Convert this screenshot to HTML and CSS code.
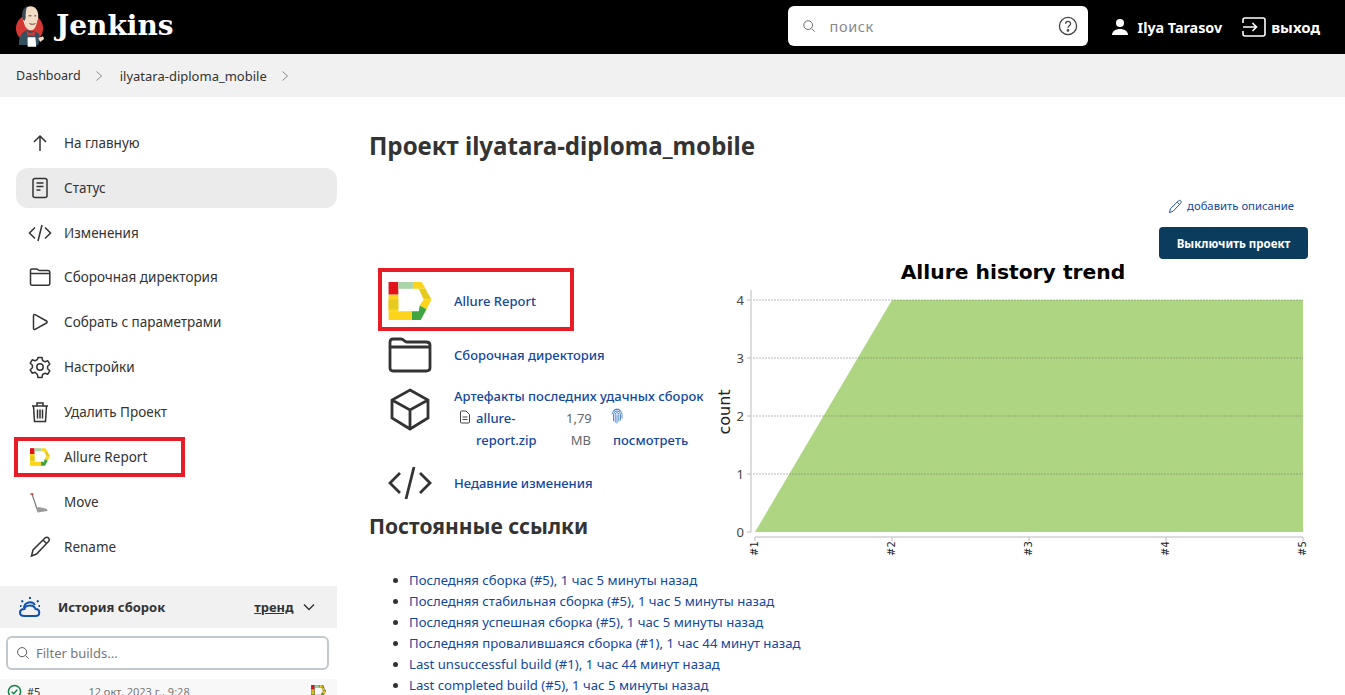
FILE: index.html
```html
<!DOCTYPE html>
<html>
    <head>
        <title>Jenkins</title>
        <link rel="stylesheet" href="styles.css">
    </head>
    <body>
        <svg class="sprites" width="0" height="0">
            <symbol id="allure" viewBox="0 0 44 39">
                <path d="M0 0h10v13H0z" fill="#e2131a"/>
                <path d="M10 0h15v7H10z" fill="#a9d5a8"/>
                <path d="M25 0h9l4 7H25z" fill="#fcd41c"/>
                <path d="M34 0l10 18h-8L31 7h7z" fill="#e5cb1f"/>
                <path d="M44 18l-5 10-7-4 4-6z" fill="#fcd41c"/>
                <path d="M39 28l-6 11h-9v-9h7l1-6z" fill="#3fa63f"/>
                <path d="M0 13h10v17H0z" fill="#fcd41c"/>
                <path d="M0 18h10v10H0z" fill="#e5cb1f"/>
                <path d="M0 30h24v9H0z" fill="#fcd41c"/>
            </symbol>
        </svg>

        <header class="topbar">
            <a class="brand">
                <svg class="brand-logo" viewBox="0 0 32 44">
                    <circle cx="15" cy="25" r="14" fill="#d33833"/>
                    <path d="M4 42c0-9 3-13 8-15l8 1c4 1 6 4 6 8l-2 6z" fill="#335061"/>
                    <path d="M8 13c0-7 3-11 8-11s8 4 8 10c0 2 0 4-1 5-1 6-3 10-7 10-4-1-6-4-7-9-1-1-1-3-1-5z" fill="#f3dcc6"/>
                    <path d="M8 16c-2-8 1-13 5-14-2 3-2 7-2 12l-1 3z" fill="#3c4a57"/>
                    <path d="M14 12h3M20 12h2M15 20c2 1 4 1 6 0" stroke="#5a3d30" stroke-width="1" fill="none"/>
                    <path d="M12 28l4 2 5-2-1 5-4-1-3 1z" fill="#d33833"/>
                    <path d="M13 34h8l1 10h-9z" fill="#fff"/>
                    <path d="M24 35l5-2 1 3-4 3z" fill="#f3dcc6"/>
                </svg>
                <span class="brand-name">Jenkins</span>
            </a>
            <div class="search">
                <svg class="search-icon" viewBox="0 0 16 16"><circle cx="7" cy="7" r="5"/><path d="M11 11l3.5 3.5"/></svg>
                <span class="search-text">поиск</span>
                <svg class="help-icon" viewBox="0 0 20 20"><circle cx="10" cy="10" r="8.6"/><path d="M7.6 7.8c0-3.2 5-3.2 5 0 0 2-2.6 2-2.6 4"/><circle class="dot" cx="10" cy="14.4" r=".7"/></svg>
            </div>
            <a class="user">
                <svg class="user-icon" viewBox="0 0 18 18"><circle cx="9" cy="5" r="4"/><path d="M1 17c0-4 4-6 8-6s8 2 8 6z"/></svg>
                Ilya Tarasov
            </a>
            <a class="logout">
                <svg class="logout-icon" viewBox="0 0 24 20"><path d="M1 6V3c0-1 1-2 2-2h18c1 0 2 1 2 2v14c0 1-1 2-2 2H3c-1 0-2-1-2-2v-3"/><path d="M1 10h13M10.500 6l4 4-4 4"/></svg>
                выход
            </a>
        </header>

        <nav class="breadcrumbs">
            <a class="crumb-root">Dashboard</a>
            <svg class="crumb-arrow" viewBox="0 0 8 12"><path d="M1.500 1.500L6.500 6l-5 4.500"/></svg>
            <a>ilyatara-diploma_mobile</a>
            <svg class="crumb-arrow" viewBox="0 0 8 12"><path d="M1.500 1.500L6.500 6l-5 4.500"/></svg>
        </nav>

        <div class="page">
            <aside class="sidebar">
                <div class="tasks">
                    <a class="task">
                        <svg class="task-icon" viewBox="0 0 24 24"><path d="M12 20V5M6 11l6-6 6 6"/></svg>
                        На главную
                    </a>
                    <a class="task active">
                        <svg class="task-icon" viewBox="0 0 24 24"><rect x="5" y="2.500" width="14" height="19" rx="2"/><path d="M8.500 7h7M8.500 10.500h7M8.500 14h4"/></svg>
                        Статус
                    </a>
                    <a class="task">
                        <svg class="task-icon" viewBox="0 0 24 24"><path d="M7 6.500L1.500 12 7 17.500M17 6.500l5.500 5.500-5.500 5.500M14 4l-4 16"/></svg>
                        Изменения
                    </a>
                    <a class="task">
                        <svg class="task-icon" viewBox="0 0 24 24"><path d="M2.500 7V5.500c0-1 .8-1.500 1.500-1.500h4.500c1.500 0 1.500 1.500 3 1.500H20c1 0 1.800.7 1.800 1.500v11.500c0 1-.8 1.700-1.800 1.700H4c-.8 0-1.500-.7-1.500-1.700zM2.500 8.500h19.300"/></svg>
                        Сборочная директория
                    </a>
                    <a class="task">
                        <svg class="task-icon" viewBox="0 0 24 24"><path d="M5.500 5.500c0-.9.8-1.300 1.600-.9L18.500 11c.8.500.8 1.500 0 2L7.100 19.400c-.8.400-1.600 0-1.600-.9z"/></svg>
                        Собрать с параметрами
                    </a>
                    <a class="task">
                        <svg class="task-icon" viewBox="0 0 24 24"><circle cx="12" cy="12" r="3.200"/><path d="M10 2.500h4l.6 3 2.400 1.300 2.800-1 2 3.400-2.200 2v2.600l2.200 2-2 3.400-2.800-1-2.400 1.300-.6 3h-4l-.6-3L7 17.200l-2.800 1-2-3.400 2.200-2v-2.600l-2.200-2 2-3.400 2.800 1 2.400-1.300z" stroke-linejoin="round"/></svg>
                        Настройки
                    </a>
                    <a class="task">
                        <svg class="task-icon" viewBox="0 0 24 24"><path d="M4 6h16M9 5.500V3h6v2.500M5.500 6l1 15.500h11l1-15.500M9.500 9.500v9M12 9.500v9M14.500 9.500v9"/></svg>
                        Удалить Проект
                    </a>
                    <a class="task">
                        <svg class="task-icon plain" viewBox="0 0 24 24"><use href="#allure" x="2" y="3" width="20" height="18"/></svg>
                        Allure Report
                        <span class="mark mark-side"></span>
                    </a>
                    <a class="task">
                        <svg class="task-icon plain" viewBox="0 0 24 24">
                            <path d="M4 4l5 15" stroke="#777" stroke-width="1.200" fill="none"/>
                            <path d="M2.500 4h3" stroke="#c33" stroke-width="1.500" fill="none"/>
                            <path d="M8 18l3-1 8 2 .5 2-10 1.500z" fill="#9a9a9a"/>
                        </svg>
                        Move
                    </a>
                    <a class="task">
                        <svg class="task-icon" viewBox="0 0 24 24"><path d="M3.500 21l1.500-6L17 3c1-1 2.500-1 3.500 0s1 2.500 0 3.500L8.500 19zM15 5l4 4"/></svg>
                        Rename
                    </a>
                </div>

                <section class="history">
                    <div class="history-head">
                        <svg class="history-icon" viewBox="0 0 24 24">
                            <path d="M6.500 21c-6 0-6-7 0-7 .5-4 9-5 11 0 5 0 5 7 0 7z"/>
                            <path d="M6 13a6 6 0 0 1 11-3M12 2v2M3.500 5.500l1.500 1.500M20.500 5.500L19 7M2 11h1.500M20.500 11H22"/>
                        </svg>
                        <span class="history-title">История сборок</span>
                        <span class="history-trend">тренд</span>
                        <svg class="history-arrow" viewBox="0 0 12 8"><path d="M1 1.500l5 5 5-5"/></svg>
                    </div>
                    <div class="filter">
                        <svg class="filter-icon" viewBox="0 0 16 16"><circle cx="7" cy="7" r="5.200"/><path d="M11 11l3.500 3.500"/></svg>
                        <span>Filter builds...</span>
                    </div>
                    <div class="build">
                        <svg class="build-icon" viewBox="0 0 16 16"><circle cx="8" cy="8" r="6.500"/><path d="M5 8.200l2.200 2.200L11 6"/></svg>
                        <span class="build-no">#5</span>
                        <span class="build-date">12 окт. 2023 г., 9:28</span>
                        <svg class="build-allure"><use href="#allure"/></svg>
                    </div>
                </section>
            </aside>

            <main class="content">
                <h1 class="title">Проект ilyatara-diploma_mobile</h1>
                <div class="actions">
                    <a class="add-desc">
                        <svg class="add-desc-icon" viewBox="0 0 16 16"><path d="M1.500 14.500l1-4L11 2c.8-.8 1.800-.8 2.500 0s.8 1.700 0 2.500L5.500 13zM10 3.500l2.500 2.500"/></svg>
                        добавить описание
                    </a>
                    <button class="disable-btn">Выключить проект</button>
                </div>

                <div class="columns">
                    <div class="summary">
                        <div class="links">
                            <div class="link-row allure-row">
                                <svg class="link-icon plain"><use href="#allure"/></svg>
                                <a>Allure Report</a>
                                <span class="mark mark-main"></span>
                            </div>
                            <div class="link-row folder-row">
                                <svg class="link-icon" viewBox="0 0 44 36"><path d="M2 8V5c0-2 1-3 3-3h8c3 0 3 3 6 3h19c2 0 4 1 4 3v23c0 2-2 3-4 3H5c-2 0-3-1-3-3zM2 10h40"/></svg>
                                <a>Сборочная директория</a>
                            </div>
                            <div class="link-row artifact-row">
                                <svg class="link-icon cube-icon" viewBox="0 0 44 44"><path d="M22 3L40 13v18L22 42 4 31V13zM4 13l18 10 18-10M22 23v19"/></svg>
                                <div class="artifact">
                                    <a>Артефакты последних удачных сборок</a>
                                    <div class="artifact-files">
                                        <svg class="file-icon" viewBox="0 0 12 14"><path d="M1.500 2c0-.6.4-1 1-1h4.500l3.500 3.500V12c0 .6-.4 1-1 1h-7c-.6 0-1-.4-1-1zM3.500 7h5M3.500 9.500h5"/></svg>
                                        <a class="file-name">allure-report.zip</a>
                                        <span class="file-size">1,79 MB</span>
                                        <span class="file-view">
                                            <svg class="print-icon" viewBox="0 0 12 16"><path d="M2.500 2.500a5 5 0 0 1 7 0M1 6.500a5 5 0 0 1 10 0v4M2.500 13V6.500a3.500 3.500 0 0 1 7 0v6M4.200 14.500V6.500a1.800 1.800 0 0 1 3.600 0v7M6 6.500v9"/></svg>
                                            <a>посмотреть</a>
                                        </span>
                                    </div>
                                </div>
                            </div>
                            <div class="link-row changes-row">
                                <svg class="link-icon" viewBox="0 0 44 36"><path d="M12 8L2 18l10 10M32 8l10 10-10 10M26 2l-8 32"/></svg>
                                <a>Недавние изменения</a>
                            </div>
                        </div>
                        <h2 class="subtitle">Постоянные ссылки</h2>
                        <ul class="permalinks">
                            <li><a>Последняя сборка (#5), 1 час 5 минуты назад</a></li>
                            <li><a>Последняя стабильная сборка (#5), 1 час 5 минуты назад</a></li>
                            <li><a>Последняя успешная сборка (#5), 1 час 5 минуты назад</a></li>
                            <li><a>Последняя провалившаяся сборка (#1), 1 час 44 минут назад</a></li>
                            <li><a>Last unsuccessful build (#1), 1 час 44 минут назад</a></li>
                            <li><a>Last completed build (#5), 1 час 5 минуты назад</a></li>
                        </ul>
                    </div>

                    <svg class="chart" viewBox="715 259 630 310">
                        <text class="chart-title" x="1013" y="279">Allure history trend</text>
                        <path class="chart-area" d="M755 532L892 300H1303V532z"/>
                        <path class="chart-grid" d="M753 300H1303M753 358H1303M753 416H1303M753 474H1303"/>
                        <path class="chart-axis" d="M751 290V532h-4M751 300h-4M751 358h-4M751 416h-4M751 474h-4"/>
                        <path class="chart-axis" d="M755 537H1303M755 537v4M892 537v4M1029 537v4M1166 537v4M1303 537v4"/>
                        <text class="chart-tick" x="744" y="305">4</text>
                        <text class="chart-tick" x="744" y="363">3</text>
                        <text class="chart-tick" x="744" y="421">2</text>
                        <text class="chart-tick" x="744" y="479">1</text>
                        <text class="chart-tick" x="744" y="537">0</text>
                        <text class="chart-label" transform="translate(730 412) rotate(-90)">count</text>
                        <text class="chart-build" transform="translate(758 556) rotate(-90)">#1</text>
                        <text class="chart-build" transform="translate(895 556) rotate(-90)">#2</text>
                        <text class="chart-build" transform="translate(1032 556) rotate(-90)">#3</text>
                        <text class="chart-build" transform="translate(1169 556) rotate(-90)">#4</text>
                        <text class="chart-build" transform="translate(1306 556) rotate(-90)">#5</text>
                    </svg>
                </div>
            </main>
        </div>
    </body>
</html>
```

FILE: styles.css
```css
html, body {
    height: 100%;
    margin: 0;
    overflow: hidden;
}
body {
    font-family: "Noto Sans", "Open Sans", sans-serif;
    font-size: 13px;
    color: #333;
    background-color: #fff;
}
svg {
    display: block;
    flex: none;
    fill: none;
    stroke: currentColor;
}
svg.plain {
    stroke: none;
}
.sprites {
    position: absolute;
}
a {
    color: inherit;
}

/* header */
.topbar {
    display: flex;
    align-items: center;
    height: 54px;
    padding: 0 25px 0 15px;
    background-color: #000;
    color: #fff;
}
.brand {
    display: flex;
    align-items: center;
    gap: 10px;
    margin-right: auto;
    margin-top: -3px;
}
.brand-logo {
    width: 31px;
    height: 43px;
    stroke: none;
}
.brand-name {
    font-family: "DejaVu Serif", serif;
    font-size: 28px;
    font-weight: bold;
}
.search {
    display: flex;
    align-items: center;
    width: 300px;
    height: 40px;
    box-sizing: border-box;
    margin-top: -2px;
    padding: 0 10px 0 14px;
    border-radius: 6px;
    background-color: #fff;
    color: #666;
}
.search-icon {
    width: 14px;
    height: 14px;
    stroke-width: 1.100;
}
.search-text {
    flex: 1;
    margin-left: 14px;
    font-size: 14.500px;
    letter-spacing: 0.6px;
    color: #888;
}
.help-icon {
    width: 20px;
    height: 20px;
    stroke-width: 1.300;
    color: #444;
}
.help-icon .dot {
    fill: currentColor;
}
.user {
    display: flex;
    align-items: center;
    gap: 9px;
    margin-left: 23px;
    font-weight: bold;
    font-size: 14.300px;
}
.user-icon {
    width: 18px;
    height: 18px;
    fill: #fff;
    stroke: none;
}
.logout {
    display: flex;
    align-items: center;
    gap: 5px;
    margin-left: 20px;
    font-weight: bold;
    font-size: 15px;
}
.logout-icon {
    width: 24px;
    height: 20px;
    stroke-width: 1.600;
}

/* breadcrumbs */
.breadcrumbs {
    display: flex;
    align-items: center;
    height: 43px;
    padding-left: 16px;
    background-color: #f1f1f1;
    color: #333;
    font-size: 13px;
}
.crumb-root {
    font-size: 12.500px;
}
.crumb-arrow {
    width: 8px;
    height: 12px;
    margin: 0 17px 0 14px;
    color: #888;
}

/* layout */
.page {
    display: flex;
}
.sidebar {
    flex: none;
    width: 337px;
}
.content {
    flex: 1;
    padding: 0 37px 0 33px;
    min-width: 0;
}

/* side panel */
.tasks {
    display: flex;
    flex-direction: column;
    gap: 4.900px;
    padding: 25.800px 0 19.100px 16px;
    font-size: 13.500px;
}
.task {
    position: relative;
    display: flex;
    align-items: center;
    gap: 12px;
    height: 40px;
    padding-left: 12px;
    border-radius: 12px;
}
.task.active {
    background-color: #ebebeb;
}
.task-icon {
    width: 24px;
    height: 24px;
    stroke-width: 1.500;
    color: #333;
}
.mark {
    position: absolute;
    box-sizing: border-box;
    border: 4px solid #e81c27;
}
.mark-side {
    left: -2px;
    top: 0;
    width: 171px;
    height: 40px;
}
.mark-main {
    left: 8px;
    top: -1px;
    width: 196px;
    height: 63px;
}

/* build history */
.history-head {
    display: flex;
    align-items: center;
    height: 42px;
    padding-left: 18px;
    background-color: #f1f1f1;
    font-weight: bold;
    font-size: 13px;
}
.history-icon {
    width: 24px;
    height: 24px;
    color: #0f52b0;
    stroke-width: 2;
}
.history-title {
    margin-left: 16px;
}
.history-trend {
    margin-left: 89px;
    text-decoration: underline;
}
.history-arrow {
    width: 12px;
    height: 8px;
    margin-left: 10px;
    stroke-width: 1.400;
}
.filter {
    display: flex;
    align-items: center;
    gap: 6px;
    height: 34px;
    box-sizing: border-box;
    margin: 8px 8px 9px 6px;
    padding-left: 8px;
    border: 2px solid #c3c8cc;
    border-radius: 6px;
    color: #777;
}
.filter-icon {
    width: 14px;
    height: 14px;
    color: #444;
}
.build {
    display: flex;
    align-items: center;
    height: 26px;
    padding: 0 11px 8px 7px;
    background-color: #f8f8f8;
    font-size: 11px;
}
.build-icon {
    width: 15px;
    height: 15px;
    color: #138347;
    stroke-width: 1.600;
}
.build-no {
    margin-left: 5px;
}
.build-date {
    flex: 1;
    margin-left: 48px;
    color: #777;
}
.build-allure {
    width: 15px;
    height: 13px;
}

/* main */
.title {
    margin: 0 0 0 -1px;
    padding-top: 34px;
    font-size: 24.100px;
    line-height: 30px;
}
.actions {
    display: flex;
    flex-direction: column;
    align-items: flex-end;
    gap: 11px;
    padding-top: 35px;
}
.add-desc {
    display: flex;
    align-items: center;
    gap: 4px;
    margin-right: 14px;
    font-size: 11.300px;
    line-height: 20px;
    color: #14489c;
}
.add-desc-icon {
    width: 15px;
    height: 15px;
}
.disable-btn {
    width: 149px;
    height: 32px;
    padding: 0;
    border: none;
    border-radius: 4px;
    background-color: #0b3c5d;
    color: #fff;
    font-family: inherit;
    font-size: 11.500px;
    font-weight: bold;
}
.columns {
    display: flex;
}
.summary {
    flex: none;
    width: 345px;
}
.chart {
    width: 630px;
    height: 310px;
    flex: none;
    stroke: none;
}
.links {
    padding-top: 10px;
}
.link-row {
    position: relative;
    display: flex;
    align-items: center;
    gap: 22px;
    padding-left: 18px;
}
.link-row a {
    color: #14489c;
    font-weight: 500;
}
.link-icon {
    width: 44px;
    height: 38px;
    stroke-width: 2.800;
    color: #333;
}
.cube-icon {
    height: 44px;
    margin-top: 2px;
}
.allure-row {
    height: 63px;
}
.folder-row {
    height: 45px;
}
.artifact-row {
    align-items: flex-start;
    height: 84px;
    padding-top: 8px;
    box-sizing: border-box;
}
.changes-row {
    height: 44px;
}
.artifact {
    display: flex;
    flex-direction: column;
    line-height: 22px;
}
.artifact-files {
    display: grid;
    grid-template-columns: 17px 90px 25px 75px;
    padding-left: 5px;
}
.file-icon {
    width: 12px;
    height: 14px;
    margin-top: 3px;
    color: #444;
}
.file-size {
    color: #666;
    text-align: right;
}
.file-view {
    padding-left: 22px;
    width: 75px;
}
.print-icon {
    width: 12px;
    height: 16px;
    margin: 1px 0 5px -2px;
    color: #2b6fc4;
    stroke-width: 0.800;
}
.subtitle {
    margin: 0 0 0 -1px;
    padding-top: 6px;
    font-size: 21px;
    line-height: 30px;
}
.permalinks {
    margin: 0;
    padding: 29px 0 0 39px;
    line-height: 21px;
    font-size: 13.150px;
    white-space: nowrap;
}
.permalinks a {
    color: #14489c;
}

/* chart */
.chart-title {
    font-family: "DejaVu Sans", sans-serif;
    font-size: 20.300px;
    font-weight: bold;
    text-anchor: middle;
    fill: #000;
}
.chart-area {
    fill: #aed581;
}
.chart-grid {
    stroke: #777;
    stroke-width: 1;
    stroke-dasharray: 2 1;
    opacity: 0.5;
}
.chart-axis {
    stroke: #bbb;
    stroke-width: 1;
    fill: none;
}
.chart-tick {
    font-family: "Noto Sans", sans-serif;
    font-size: 13px;
    text-anchor: end;
    fill: #444;
}
.chart-label {
    font-family: "DejaVu Sans", sans-serif;
    font-size: 16px;
    text-anchor: middle;
    fill: #222;
}
.chart-build {
    font-family: "DejaVu Sans", sans-serif;
    font-size: 10px;
    fill: #222;
}
```
